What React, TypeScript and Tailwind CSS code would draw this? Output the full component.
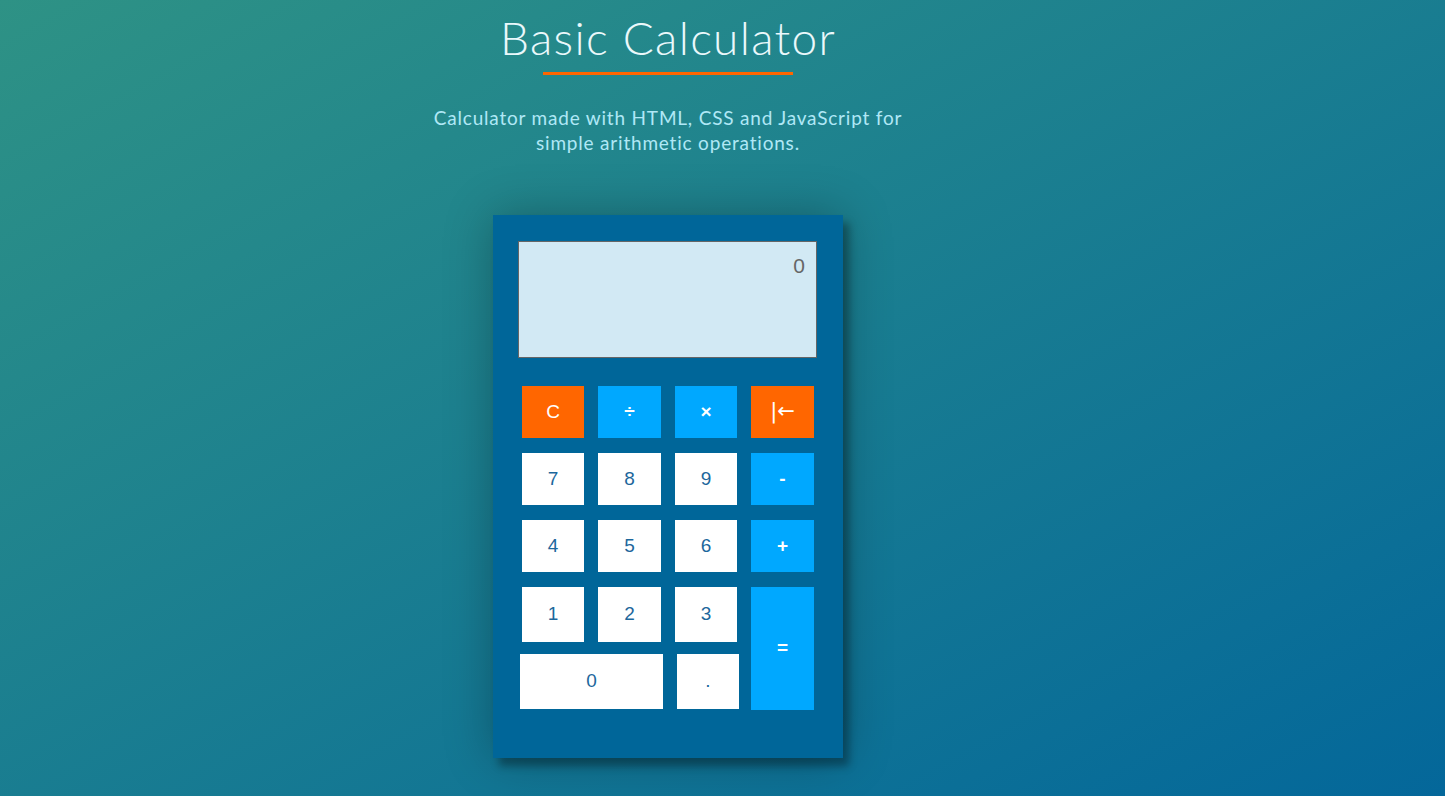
import React from 'react'

const digitKey = 'flex items-center justify-center bg-white text-[19px] text-[#1d679c]'
const opKey = 'flex items-center justify-center bg-[#00a8ff] text-[19px] font-bold text-white'
const warnKey = 'flex items-center justify-center bg-[#ff6600] text-[19px] text-white'

export default function App() {
  return (
    <div
      className="min-h-screen w-full bg-linear-to-br from-[#2e9285] to-[#04679a] pr-[109px] flex flex-col items-center"
      style={{ fontFamily: '"Liberation Sans", Arial, sans-serif' }}
    >
      <h1
        className="mt-[10px] text-[46px] font-light leading-[56px] tracking-[1.3px] text-[#eaf8fb]"
        style={{ fontFamily: 'Lato, "Open Sans", sans-serif' }}
      >
        Basic Calculator
      </h1>
      <div className="mt-[6px] h-[3px] w-[250px] bg-[#ff6600]" />
      <p
        className="mt-[30px] text-center text-[19px] leading-[25px] tracking-[0.8px] text-[#b0e8f6]"
        style={{ fontFamily: 'Lato, "Open Sans", sans-serif' }}
      >
        Calculator made with HTML, CSS and JavaScript for
        <br />
        simple arithmetic operations.
      </p>

      <div className="mt-[60px] h-[543px] w-[350px] bg-[#006699] pl-[25px] pt-[26px] shadow-[6px_8px_8px_rgba(0,0,0,0.32),0_0_45px_rgba(0,0,0,0.28)]">
        <div className="h-[117px] w-[299px] border border-[#666] bg-[#d2e9f4] pr-[11px] pt-[12px] text-right text-[21px] leading-[24px] text-[#666]">
          0
        </div>

        <div className="ml-[4px] mt-[28px] grid grid-cols-[62px_63px_62px_63px] grid-rows-[52px_52px_52px_55px_55px] gap-x-[14px] gap-y-[15px]">
          <button className={warnKey}>C</button>
          <button className={opKey}>÷</button>
          <button className={opKey}>×</button>
          <button
            className={`${warnKey} text-[21px]`}
            style={{ fontFamily: '"DejaVu Sans", sans-serif' }}
          >
            |←
          </button>

          <button className={digitKey}>7</button>
          <button className={digitKey}>8</button>
          <button className={digitKey}>9</button>
          <button className={opKey}>-</button>

          <button className={digitKey}>4</button>
          <button className={digitKey}>5</button>
          <button className={digitKey}>6</button>
          <button className={opKey}>+</button>

          <button className={digitKey}>1</button>
          <button className={digitKey}>2</button>
          <button className={digitKey}>3</button>
          <button className={`${opKey} row-span-2 h-[123px] self-start`}>=</button>

          <button className={`${digitKey} col-span-2 -mx-[2px] -mt-[3px] h-[55px] self-start`}>0</button>
          <button className={`${digitKey} ml-[2px] -mr-[2px] -mt-[3px] h-[55px] self-start`}>.</button>
        </div>
      </div>
    </div>
  )
}
